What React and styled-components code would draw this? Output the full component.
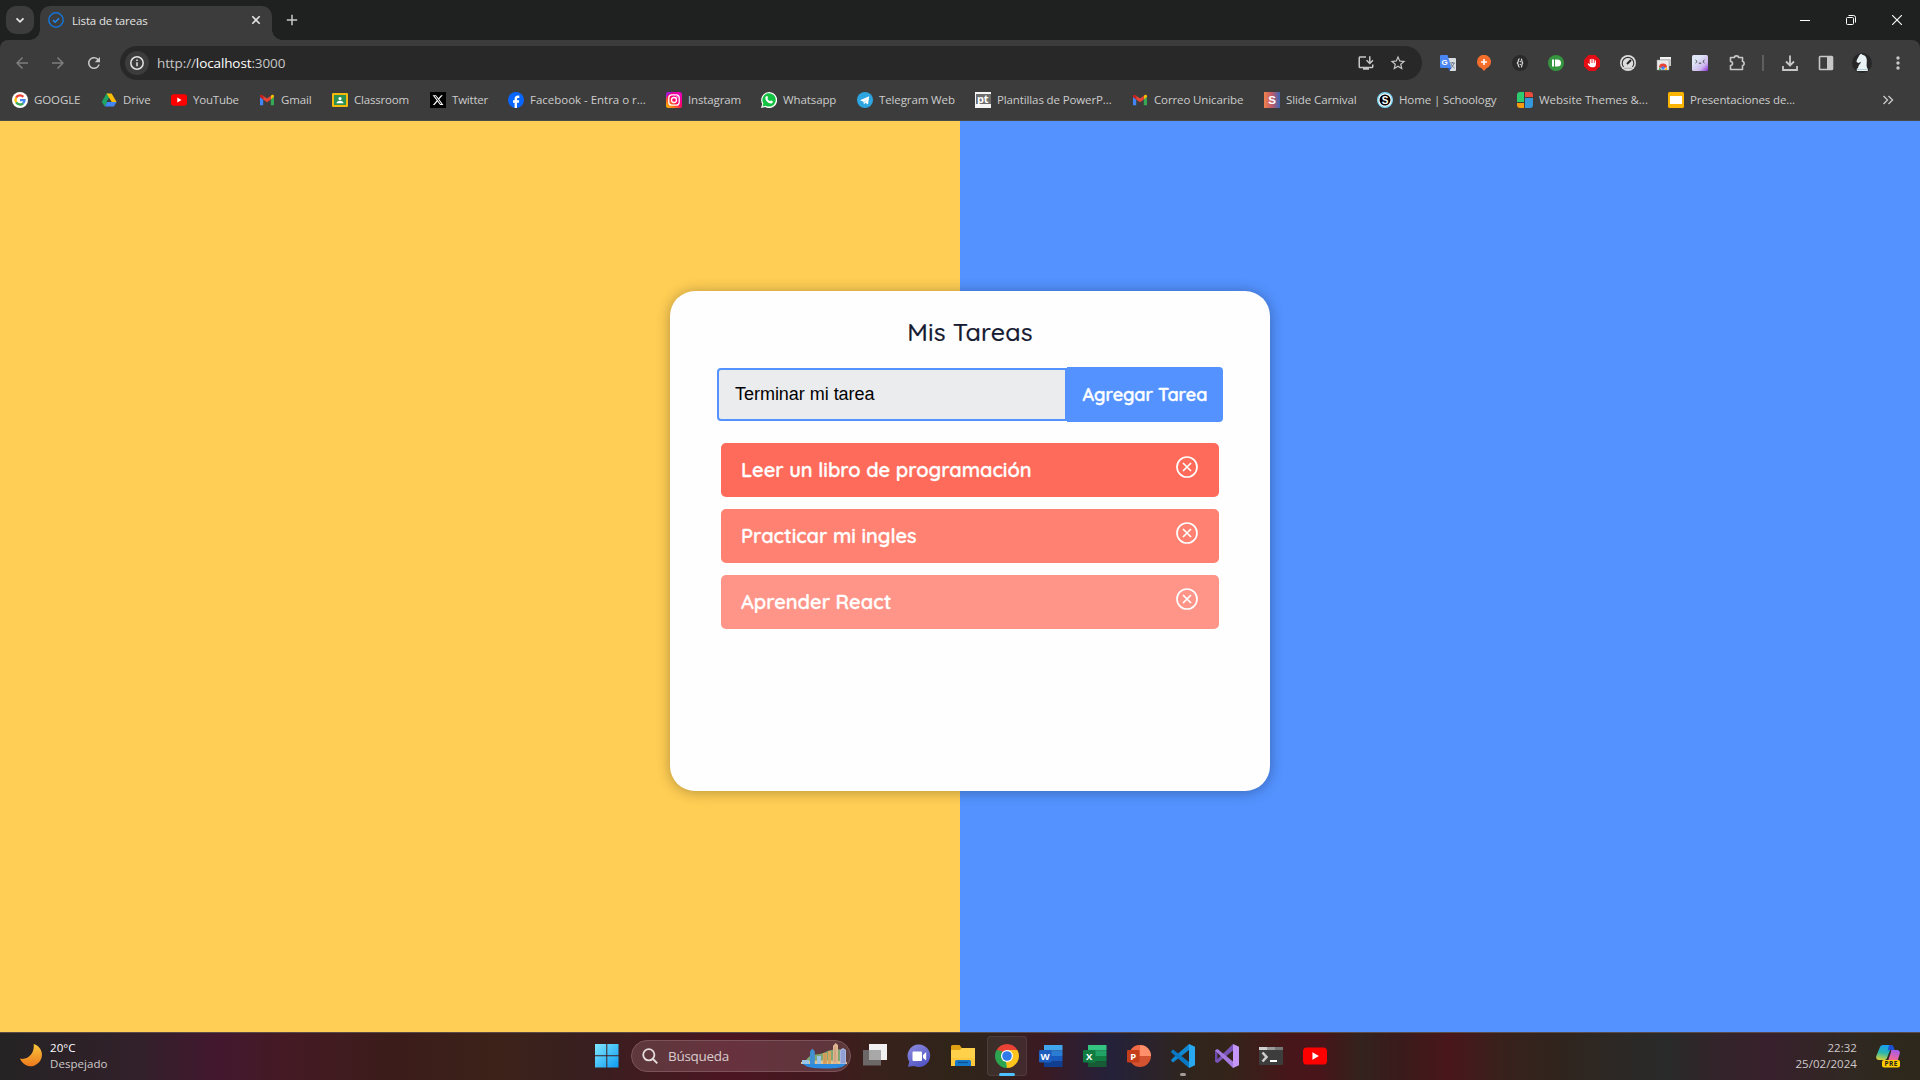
import React from "react";
import styled, { createGlobalStyle } from "styled-components";
import { MdArrowBack, MdArrowForward, MdRefresh, MdStarBorder, MdOutlineInstallDesktop, MdMoreVert } from "react-icons/md";
import { FaXTwitter, FaHand } from "react-icons/fa6";

const Global = createGlobalStyle`
  * { box-sizing: border-box; }
  body { margin: 0; overflow: hidden; background: #3c3c3c; }
  svg { display: block; flex: none; }
  button { border: 0; padding: 0; background: none; font: inherit; color: inherit; }
`;

const ui = `"Open Sans", "Noto Sans", sans-serif`;
const round = `Quicksand, Lato, "Open Sans", sans-serif`;

const Screen = styled.div`
  width: 1920px;
  height: 1080px;
  display: flex;
  flex-direction: column;
  font-family: ${ui};
`;

/* ---------- browser chrome ---------- */
const TabStrip = styled.div`
  height: 40px;
  display: flex;
  align-items: flex-end;
  background: #1f2120;
  color: #e3e3e3;
`;
const TabSearch = styled.button`
  width: 28px;
  height: 28px;
  margin: 0 6px 6px;
  display: grid;
  place-items: center;
  border-radius: 10px;
  background: #3c3c3c;
`;
const Tab = styled.div`
  position: relative;
  width: 232px;
  height: 34px;
  padding: 0 8px 6px 8px;
  display: flex;
  align-items: center;
  border-radius: 10px 10px 0 0;
  background: #3c3c3c;
  &::before,
  &::after {
    content: "";
    position: absolute;
    bottom: 0;
    width: 10px;
    height: 10px;
  }
  &::before {
    left: -10px;
    background: radial-gradient(circle at 0 0, transparent 9.5px, #3c3c3c 10px);
  }
  &::after {
    right: -10px;
    background: radial-gradient(circle at 100% 0, transparent 9.5px, #3c3c3c 10px);
  }
`;
const TabTitle = styled.span`
  flex: 1;
  margin-left: 8px;
  font-size: 11.5px;
  letter-spacing: -0.16px;
  white-space: nowrap;
`;
const NewTab = styled.button`
  width: 28px;
  height: 28px;
  margin: 0 0 6px 6px;
  display: grid;
  place-items: center;
`;
const WindowButtons = styled.div`
  height: 40px;
  margin-left: auto;
  display: flex;
`;
const WindowButton = styled.button`
  width: 46px;
  display: grid;
  place-items: center;
`;

const ToolbarBack = styled.div`
  background: #1f2120;
`;
const Toolbar = styled.div`
  height: 46px;
  padding: 0 4px 0 4px;
  display: flex;
  align-items: center;
  border-radius: 8px 8px 0 0;
  background: #3c3c3c;
  color: #c7c7c7;
`;
const NavButton = styled.button`
  width: 36px;
  height: 34px;
  display: grid;
  place-items: center;
  color: ${(p) => (p.$dim ? "#7d7d7d" : "#c7c7c7")};
`;
const AddressBar = styled.div`
  width: 1302px;
  height: 34px;
  margin-left: 8px;
  padding: 0 14px 0 5px;
  display: flex;
  align-items: center;
  border-radius: 17px;
  background: #282828;
`;
const SiteInfo = styled.span`
  width: 24px;
  height: 24px;
  display: grid;
  place-items: center;
  border-radius: 50%;
  background: #3c3c3c;
`;
const Url = styled.span`
  flex: 1;
  margin-left: 8px;
  font-size: 13.5px;
  letter-spacing: -0.11px;
  color: #c7c7c7;
  b {
    font-weight: 400;
    color: #fff;
  }
`;
const AddressAction = styled.button`
  width: 20px;
  margin-left: 12px;
  display: grid;
  place-items: center;
  color: #c7c7c7;
`;
const Extensions = styled.div`
  margin-left: 8px;
  display: flex;
  align-items: center;
`;
const Extension = styled.button`
  width: 36px;
  height: 34px;
  display: grid;
  place-items: center;
  color: #c7c7c7;
`;
const Divider = styled.span`
  width: 2px;
  height: 16px;
  margin: 0 8px;
  background: #5f5f5f;
`;

const BookmarksBar = styled.div`
  height: 35px;
  padding: 0 26px 7px 12px;
  display: flex;
  align-items: center;
  background: #3c3c3c;
  border-bottom: 1px solid #4a4a4a;
  color: #cccccc;
`;
const Bookmark = styled.a`
  width: ${(p) => p.$w}px;
  display: flex;
  flex: none;
  align-items: center;
  gap: 6px;
  font-size: 11.5px;
  letter-spacing: ${(p) => p.$ls ?? -0.12}px;
  white-space: nowrap;
`;
const More = styled.button`
  margin-left: auto;
`;

/* ---------- page ---------- */
const Page = styled.main`
  flex: 1;
  padding-left: 20px;
  display: flex;
  justify-content: center;
  align-items: flex-start;
  background: linear-gradient(90deg, #ffce54 50%, #5392ff 50%);
`;
const Card = styled.section`
  width: 600px;
  height: 500px;
  margin-top: 170px;
  padding: 21px 47px 0;
  display: flex;
  flex-direction: column;
  align-items: center;
  border-radius: 25px;
  background: #fefefe;
  box-shadow: 0 1px 14px rgba(0, 0, 0, 0.3);
`;
const Title = styled.h1`
  height: 40px;
  margin: 0;
  font: 500 25px/40px ${round};
  letter-spacing: 0.15px;
  color: #161a31;
  -webkit-text-stroke: 0.2px #161a31;
`;
const Form = styled.form`
  width: 506px;
  height: 55px;
  margin-top: 15px;
  display: flex;
  align-items: center;
`;
const Input = styled.input`
  width: 350px;
  height: 53px;
  padding: 0 16px;
  border: 2px solid #5392ff;
  border-radius: 4px 0 0 4px;
  outline: 0;
  background: #ebecee;
  color: #000;
  font: 18px "Liberation Sans", Arial, sans-serif;
  letter-spacing: -0.03px;
`;
const AddButton = styled.button`
  width: 156px;
  height: 55px;
  border-radius: 0 4px 4px 0;
  background: #5392ff;
  color: #fff;
  font: 600 18px ${round};
  -webkit-text-stroke: 0.4px #fff;
  white-space: nowrap;
`;
const List = styled.ul`
  width: 498px;
  margin: 21px 0 0;
  padding: 0;
  display: flex;
  flex-direction: column;
  gap: 12px;
  list-style: none;
`;
const Task = styled.li`
  height: 54px;
  padding: 0 21.500px 2px 20px;
  display: flex;
  align-items: center;
  justify-content: space-between;
  border-radius: 5px;
  background: ${(p) => p.$bg};
  color: #fff;
  font: 600 20px ${round};
  -webkit-text-stroke: 0.3px #fff;
`;
const Remove = styled.button`
  padding-bottom: 4px;
`;

/* ---------- taskbar ---------- */
const Taskbar = styled.footer`
  height: 48px;
  padding-bottom: 2px;
  display: flex;
  align-items: center;
  border-top: 1px solid #5a4a48;
  background: linear-gradient(
    90deg,
    #252324 0,
    #32202a 140px,
    #43182f 215px,
    #451a24 285px,
    #3b1c1a 400px,
    #3c2219 500px,
    #38201f 570px,
    #421a20 660px,
    #4b1521 730px,
    #42191f 820px,
    #3a211c 870px,
    #302419 950px,
    #30231d 990px,
    #3b1a22 1040px,
    #24213a 1110px,
    #30251d 1190px,
    #34241a 1230px,
    #47161a 1290px,
    #48151a 1320px,
    #33221d 1360px,
    #3a1b1b 1400px,
    #49161b 1450px,
    #39211c 1500px,
    #30251e 1560px,
    #292a2a 1665px,
    #33242a 1720px,
    #38202c 1770px,
    #302822 1850px,
    #2d281a 1920px
  );
  color: #fff;
`;
const Weather = styled.div`
  width: 585px;
  padding-left: 20px;
  display: flex;
  align-items: center;
  gap: 6px;
`;
const Lines = styled.div`
  font-size: 11.5px;
  line-height: 16px;
  letter-spacing: 0.05px;
  text-align: ${(p) => p.$align};
`;
const Muted = styled.div`
  color: #cfc9ca;
`;
const TaskButton = styled.button`
  position: relative;
  width: 44px;
  height: 46px;
  display: grid;
  place-items: center;
`;
const Apps = styled.div`
  margin-left: 2px;
  display: flex;
`;
const ActiveTile = styled.span`
  width: 40px;
  height: 40px;
  display: grid;
  place-items: center;
  border-radius: 4px;
  border: 1px solid rgba(255, 255, 255, 0.08);
  background: rgba(255, 255, 255, 0.06);
`;
const Indicator = styled.i`
  position: absolute;
  bottom: 3px;
  left: ${(p) => 22 - p.$w / 2}px;
  width: ${(p) => p.$w}px;
  height: 3px;
  border-radius: 2px;
  background: ${(p) => p.$c};
`;
const SearchBox = styled.div`
  width: 220px;
  height: 32px;
  margin-left: 2px;
  padding: 0 2px 0 10px;
  display: flex;
  align-items: center;
  border: 1px solid #7b5359;
  border-radius: 16px;
  background: rgba(255, 205, 215, 0.16);
  color: #d8cccd;
  font-size: 13.5px;
`;
const SearchText = styled.span`
  flex: 1;
  margin-left: 10px;
  letter-spacing: -0.3px;
`;
const Tray = styled.div`
  margin-left: auto;
  padding-right: 20px;
  display: flex;
  align-items: center;
  gap: 19px;
`;

/* ---------- drawings ---------- */
const Svg = ({ s = 16, v = 16, children }) => (
  <svg width={s} height={s} viewBox={`0 0 ${v} ${v}`} fill="none">
    {children}
  </svg>
);
const Google = () => (
  <Svg>
    <circle cx="8" cy="8" r="8" fill="#fff" />
    <g strokeWidth="2.3">
      <path d="M4.1 5.7A4.5 4.5 0 0 1 11.3 4.9" stroke="#ea4335" />
      <path d="M4.1 5.7A4.5 4.5 0 0 0 4.2 10.4" stroke="#fbbc05" />
      <path d="M4.2 10.4A4.5 4.5 0 0 0 11.1 11.3" stroke="#34a853" />
      <path d="M11.1 11.3A4.5 4.5 0 0 0 12.5 8.2H8" stroke="#4285f4" />
    </g>
  </Svg>
);
const Drive = () => (
  <Svg>
    <path d="M5.5 1.5h2.6l2 3.5-6.3 9.5L.8 10z" fill="#1fa463" />
    <path d="M5.6 1.5h5L15.6 10h-5z" fill="#fbbc04" />
    <path d="M3.8 14.6 6.4 10h9.2l-2.7 4.6z" fill="#4285f4" />
    <path d="m8 5.7 2.4 4.3H5.5z" fill="#3c3c3c" />
  </Svg>
);
const YouTube = ({ s = 16 }) => (
  <Svg s={s}>
    <rect x="0" y="2.3" width="16" height="11.4" rx="2.6" fill="#f00" />
    <path d="M6.3 5.5v5l4.3-2.5z" fill="#fff" />
  </Svg>
);
const Gmail = () => (
  <Svg>
    <path d="M1 13.3V5l3.2 2.4v5.9z" fill="#4285f4" />
    <path d="M11.8 13.3V7.4L15 5v8.3z" fill="#34a853" />
    <path d="M11.8 7.4V3.8l1-.8c1-.7 2.2 0 2.2 1.1V5z" fill="#fbbc04" />
    <path d="M4.2 7.4V3.8L8 6.6l3.8-2.8v3.6L8 10.3z" fill="#ea4335" />
    <path d="M1 5v-.9C1 3 2.2 2.3 3.2 3l1 .8v3.6z" fill="#c5221f" />
  </Svg>
);
const Classroom = () => (
  <Svg>
    <rect y="1" width="16" height="14" rx="1" fill="#f6b90c" />
    <rect x="2" y="3" width="12" height="10" fill="#2f9150" />
    <circle cx="8" cy="6.6" r="1.6" fill="#fff" />
    <path d="M4.5 11.3c0-3.4 7-3.4 7 0z" fill="#fff" />
  </Svg>
);
const Twitter = () => (
  <Svg>
    <rect width="16" height="16" fill="#000" />
    <FaXTwitter x="2" y="2" size={12} color="#fff" />
  </Svg>
);
const Facebook = () => (
  <Svg>
    <circle cx="8" cy="8" r="8" fill="#0866ff" />
    <path d="M6.6 16v-5.3H5V8.3h1.6V7.2c0-2.4 1.1-3.6 3.6-3.6.4 0 .9.1 1.1.1v2.2h-1c-1 0-1.3.4-1.3 1.3v1.1h2.2l-.4 2.4H9V16z" fill="#fff" />
  </Svg>
);
const Instagram = () => (
  <Svg>
    <defs>
      <linearGradient id="ig" x1="0" y1="1" x2=".8" y2="0">
        <stop offset="0" stopColor="#ffc800" />
        <stop offset=".3" stopColor="#ff6a1c" />
        <stop offset=".55" stopColor="#ff0069" />
        <stop offset="1" stopColor="#e800c0" />
      </linearGradient>
    </defs>
    <rect width="16" height="16" rx="2.5" fill="url(#ig)" />
    <path d="M0 7V2.5A2.5 2.5 0 0 1 2.5 0H9C4 .5 1 3 0 7z" fill="#8a20f0" opacity=".8" />
    <rect x="2.8" y="2.8" width="10.4" height="10.4" rx="3" stroke="#fff" strokeWidth="1.3" />
    <circle cx="8" cy="8" r="2.5" stroke="#fff" strokeWidth="1.3" />
    <circle cx="11" cy="5" r=".7" fill="#fff" />
  </Svg>
);
const Whatsapp = () => (
  <Svg>
    <path d="M0 16l1.2-4A8 8 0 1 1 4.2 15z" fill="#fff" />
    <path d="M1.6 14.4l.8-2.9A6.7 6.7 0 1 1 4.7 13.7z" fill="#13c143" />
    <path d="M5.3 4.2c.4-.4.9-.3 1.1.1l.6 1.3c.1.3-.6.9-.5 1.2.5 1 1.5 2 2.6 2.4.3.1.8-.9 1.2-.7l1.4.7c.5.3 0 1.6-.7 2-2.8 1.2-7-2.7-6.6-5.5 0-.6.5-1.2.9-1.5z" fill="#fff" />
  </Svg>
);
const Telegram = () => (
  <Svg>
    <circle cx="8" cy="8" r="8" fill="#2ca5e0" />
    <path d="M3 8.2 12.2 4.2 11 12.4 8.4 10.7 7 12.3 6.6 9.7z" fill="#fff" />
    <path d="M6.6 9.7 10.5 6.2 8.3 10.7 7 12.3z" fill="#d5ebf7" />
  </Svg>
);
const Plantillas = () => (
  <Svg>
    <rect width="16" height="16" fill="#f5f5f5" />
    <rect x="1" y="2" width="15" height="10" fill="#6d6d6d" />
    <text x="2" y="11" fontSize="11" fontWeight="700" fill="#fff" fontFamily="Open Sans, sans-serif">pt</text>
  </Svg>
);
const Slide = () => (
  <Svg>
    <defs>
      <linearGradient id="sl"><stop stopColor="#f0824c" /><stop offset=".5" stopColor="#c05a6a" /><stop offset="1" stopColor="#3d65b5" /></linearGradient>
    </defs>
    <rect width="16" height="16" fill="url(#sl)" />
    <text x="8" y="12.3" fontSize="11.5" fontWeight="700" fill="#fff" textAnchor="middle" fontFamily="Liberation Sans, sans-serif">S</text>
  </Svg>
);
const Schoology = () => (
  <Svg>
    <circle cx="8" cy="8" r="7.3" fill="#fff" stroke="#7fd4f5" strokeWidth="1.4" />
    <circle cx="8" cy="8" r="5.5" fill="#000" />
    <text x="8" y="11.6" fontSize="10" fontWeight="700" fill="#fff" textAnchor="middle" fontFamily="Liberation Sans, sans-serif">S</text>
  </Svg>
);
const Themes = () => (
  <Svg>
    <path d="M0 10V3a3 3 0 0 1 3-3h4v10z" fill="#2ecc71" />
    <path d="M8 5V0h5a3 3 0 0 1 3 3v2z" fill="#e74c3c" />
    <path d="M8 6h8v7a3 3 0 0 1-3 3H8z" fill="#3498db" />
    <path d="M0 11h7v5H3a3 3 0 0 1-3-3z" fill="#f39c12" />
  </Svg>
);
const Slides = () => (
  <Svg>
    <rect width="16" height="16" rx="1.5" fill="#f9b404" />
    <rect x="2" y="4" width="12" height="8" fill="#fff" />
  </Svg>
);

const Translate = () => (
  <Svg>
    <path d="M6 3h9a1 1 0 0 1 1 1v11a1 1 0 0 1-1 1h-5z" fill="#d9dee3" />
    <path d="M10 8h5M12.5 7v1M14 8c-.5 2.500-2 4-3.500 5M11 9c.5 1.500 2 3 3.500 4" stroke="#6b7c88" strokeWidth="1" />
    <path d="M1 0h6.500l4 13H1a1 1 0 0 1-1-1V1a1 1 0 0 1 1-1z" fill="#4b87f3" />
    <path d="M8 13h3.500L9 16z" fill="#2a56c6" />
    <text x="1.5" y="9.5" fontSize="8" fontWeight="700" fill="#fff" fontFamily="Liberation Sans, sans-serif">G</text>
  </Svg>
);
const Pin = () => (
  <Svg>
    <path d="M8 16 5.500 13.300A7 7 0 0 1 1 7a7 7 0 1 1 9.500 6.300z" fill="#f36d2b" />
    <path d="M8 4v6M5 7h6" stroke="#fff" strokeWidth="1.6" />
  </Svg>
);
const Braces = () => (
  <Svg>
    <circle cx="8" cy="8" r="8" fill="#2a2a2a" />
    <path d="M7.6 3.800C5.800 3.800 6.800 7 5.400 8c1.400 1 .4 4.200 2.200 4.200M9 3.800c1.500.2.400 3.200 1.600 4.200-1.200 1-.1 4-1.600 4.200" stroke="#e2e2e2" strokeWidth="1.2" />
    <circle cx="8.3" cy="6.5" r=".7" fill="#e2e2e2" />
    <circle cx="8.3" cy="9.5" r=".7" fill="#e2e2e2" />
  </Svg>
);
const Pushbullet = () => (
  <Svg>
    <circle cx="8" cy="8" r="8" fill="#35953f" />
    <path d="M4 4.500h2v7H4zM7 4.500h2.500a3.500 3.500 0 0 1 0 7H7z" fill="#fff" />
  </Svg>
);
const AdBlock = () => (
  <Svg>
    <path d="M4.700 0h6.600L16 4.700v6.600L11.300 16H4.700L0 11.300V4.700z" fill="#e40d13" />
    <FaHand x="3.5" y="3.5" size={9} color="#fff" />
  </Svg>
);
const Gauge = () => (
  <Svg>
    <circle cx="8" cy="8" r="8" fill="#ddd" />
    <path d="M3.600 12A5.800 5.800 0 1 1 12.400 12" stroke="#333" strokeWidth="1.1" />
    <path d="m7 9 4-4" stroke="#222" strokeWidth="1.9" />
    <path d="M4 13.300h8" stroke="#aaa" />
  </Svg>
);
const Stack = () => (
  <Svg>
    <path d="M4 2h11v9H4z" fill="#c9c9c9" />
    <path d="M4 2h11v2H4z" fill="#f3f3f3" />
    <path d="M1 5h12v10H1z" fill="#e9e9e9" stroke="#999" strokeWidth=".5" />
    <path d="M3 12.500a4 4 0 0 1 8 0l-4 .5z" fill="#ea4335" />
    <path d="M3 12 5.500 15H3.200z" fill="#34a853" />
    <path d="M11 12a4 4 0 0 1-.2 3H8.500z" fill="#fbbc05" />
    <circle cx="7" cy="13" r="1.8" fill="#4285f4" />
  </Svg>
);
const Face = () => (
  <Svg>
    <defs>
      <linearGradient id="fc" x1="0" y1="0" x2="1" y2="1"><stop offset=".3" stopColor="#dfe6f6" /><stop offset=".7" stopColor="#cdb9ee" /><stop offset="1" stopColor="#8a2bd6" /></linearGradient>
    </defs>
    <rect width="16" height="16" rx="1.5" fill="url(#fc)" />
    <path d="m3.500 5 1.600 1.500L3.500 8M12.500 5l-1.600 1.500L12.500 8M6.800 8.200h2.400" stroke="#333" strokeWidth=".9" />
  </Svg>
);
const Puzzle = () => (
  <Svg s={18} v={18}>
    <path d="M3.500 3.500h4a2 1.600 0 0 1 4 0h4v4a1.600 2 0 0 1 0 4v4h-12v-4a2 2 0 0 0 0-4z" stroke="#c7c7c7" strokeWidth="1.6" strokeLinejoin="round" />
  </Svg>
);
const Knight = () => (
  <Svg s={20} v={20}>
    <circle cx="10" cy="10" r="10" fill="#272727" />
    <path d="M7.500 2 9 .8l1.500 1c3 .6 4.500 3 4.300 6 0 3-.5 4.500.2 7l.8 1.200v2H4.800v-2L6 14.800c.3-2.500 2.500-4 3-6L6.500 10 4.500 9l.3-2z" fill="#e9f3f6" />
    <path d="M5 16.500h10.500" stroke="#9fc0cc" strokeWidth=".7" />
  </Svg>
);

const Windows = () => (
  <Svg s={24} v={24}>
    <defs>
      <linearGradient id="wn" x1="0" y1="0" x2="1" y2="1"><stop stopColor="#7fe7fd" /><stop offset="1" stopColor="#0d9bf5" /></linearGradient>
    </defs>
    <path d="M0 0h11.300v11.300H0zM12.300 0h11.200v11.300H12.300zM0 12.300h11.300v11.200H0zM12.300 12.300h11.200v11.200H12.300z" fill="url(#wn)" />
  </Svg>
);
const City = () => (
  <svg width="48" height="26" viewBox="0 0 48 26">
    <path d="M5 20c3-9 9-8 15-9S33 3 45 8v14H5z" fill="#7fa774" />
    <path d="M1 19c10-2 36-2 46 0v2H1z" fill="#e3c48e" />
    <path d="M3 21h43c-3 4-10 4.500-20 4.500S7 25 3 21z" fill="#2b8be0" />
    <path d="M10 8.500l2.500-3 2.300 3V21H10z" fill="#3f8fd2" />
    <path d="M2 17h7v4H2zM17 13h4v8h-4z" fill="#9cc4e6" />
    <path d="M23 10h4v11h-4zM28 8h3v13h-3z" fill="#d7a45f" />
    <path d="M33 3l2.500-3L38 2v19h-5z" fill="#dfb491" />
    <path d="M40 7l3-2 3 2v14h-6z" fill="#a7b5e0" />
    <path d="M42 7v13M44 7v13" stroke="#6979b8" strokeWidth=".7" />
    <path d="M35 4v15M25 11v9" stroke="#b98662" strokeWidth=".7" />
  </svg>
);
const TaskView = () => (
  <Svg s={24} v={24}>
    <path d="M6 0h18v16H6z" fill="#f0f0f0" />
    <path d="M0 6h18v15.500H0z" fill="#6c6867" />
    <path d="M6 6h12v10H6z" fill="#a8a8a8" />
  </Svg>
);
const Chat = () => (
  <Svg s={24} v={24}>
    <defs>
      <linearGradient id="ch" x1="0" y1="0" x2=".6" y2="1"><stop stopColor="#8f8de0" /><stop offset="1" stopColor="#5356c4" /></linearGradient>
    </defs>
    <path d="M12 .5a11.300 11.300 0 1 1-5 21.500l-6 .8 1.300-5A11.300 11.300 0 0 1 12 .5z" fill="url(#ch)" />
    <rect x="5.5" y="7.5" width="9.5" height="9.5" rx="1" fill="#fff" />
    <path d="M16 11l3.200-3v8.500L16 13.700z" fill="#fff" />
  </Svg>
);
const Explorer = () => (
  <Svg s={24} v={24}>
    <path d="M0 2.500A1.500 1.500 0 0 1 1.500 1h7l2 2.500V9H0z" fill="#e0a013" />
    <path d="M0 6h9l1.500-2H24v18H0z" fill="#ffd04a" />
    <path d="M0 14h24v8H0z" fill="#fbc02d" opacity=".5" />
    <path d="M4 22v-4.500A1.500 1.500 0 0 1 5.500 16h13a1.500 1.500 0 0 1 1.500 1.500V22z" fill="#1578c8" />
    <path d="M7 18.500h10" stroke="#0c4f92" strokeWidth="1.2" />
  </Svg>
);
const Chrome = () => (
  <Svg s={24} v={24}>
    <path d="M12 12 1.610 6A12 12 0 0 1 22.390 6z" fill="#ea4335" />
    <path d="M12 12V24A12 12 0 0 1 1.610 6z" fill="#2da44f" />
    <path d="M12 12 22.390 6A12 12 0 0 1 12 24z" fill="#fcc41c" />
    <path d="M12 6h10.390L17 12z" fill="#fcc41c" />
    <path d="M6.800 15 1.610 6l5 1 2 5z" fill="#2da44f" />
    <path d="M17.200 15 12 24l-1-6z" fill="#fcc41c" />
    <circle cx="12" cy="12" r="6" fill="#fff" />
    <circle cx="12" cy="12" r="4.8" fill="#3079ea" />
  </Svg>
);
const Office = ({ letter, bands, badge }) => (
  <Svg s={24} v={24}>
    {bands.map((fill, i) => (
      <rect key={fill} x="5" y={1 + i * 5.5} width="18.5" height="5.5" fill={fill} />
    ))}
    <rect x="0" y="6" width="12.5" height="12.5" rx="1.2" fill={badge} />
    <text x="6.2" y="15.800" fontSize="9.5" fontWeight="700" fill="#fff" textAnchor="middle" fontFamily="Open Sans, sans-serif">{letter}</text>
  </Svg>
);
const PowerPoint = () => (
  <Svg s={24} v={24}>
    <circle cx="13" cy="12" r="11" fill="#d35230" />
    <path d="M13 1a11 11 0 0 1 11 11H13z" fill="#ff8f6b" />
    <path d="M13 1a11 11 0 0 0-11 11h11z" fill="#ed6c47" />
    <rect x="0" y="6" width="12.5" height="12.5" rx="1.2" fill="#c43e1c" />
    <text x="6.2" y="15.800" fontSize="9.5" fontWeight="700" fill="#fff" textAnchor="middle" fontFamily="Open Sans, sans-serif">P</text>
  </Svg>
);
const VsCode = () => (
  <Svg s={24} v={24}>
    <path d="M18 6 2 18.500.3 17V15.500L18 0z" fill="#1189d2" />
    <path d="M18 18 2 5.500.3 7v1.500L18 24z" fill="#0a78c2" />
    <path d="M18 0l6 2.800v18.400L18 24z" fill="#2aa9f3" />
  </Svg>
);
const VisualStudio = () => (
  <Svg s={24} v={24}>
    <path d="M0 6.500 2.500 5v14L0 17.500z" fill="#6a4bab" />
    <path d="M18 0v6.500L2.500 19 0 17.500z" fill="#7a55b8" />
    <path d="M2.500 5 18 17.500V24L0 6.500z" fill="#a57be0" />
    <path d="M18 0l6 2.800v18.400L18 24z" fill="#c596f5" />
  </Svg>
);
const Terminal = () => (
  <Svg s={24} v={24}>
    <rect y="3" width="24" height="18" rx="1" fill="#3d3d3d" />
    <path d="M0 3h8v3H0z" fill="#d0d0d0" />
    <path d="M8 3h8v3H8z" fill="#9a9a9a" />
    <path d="M16 3h8v3h-8z" fill="#777" />
    <path d="m3.500 8.500 4 4.500-4 4.500" stroke="#ccc" strokeWidth="2.6" />
    <path d="M11 17h7" stroke="#fff" strokeWidth="2" />
  </Svg>
);
const Moon = () => (
  <svg width="24" height="24" viewBox="0 0 24 24">
    <defs>
      <linearGradient id="mo" x1="0" y1="0" x2="0" y2="1"><stop stopColor="#f8c63d" /><stop offset="1" stopColor="#ee7a1c" /></linearGradient>
    </defs>
    <path d="M14.500 0A12 12 0 1 1 0 15.500C8 17.500 16 10 14.500 0z" fill="url(#mo)" transform="scale(.94)" />
  </svg>
);
const Copilot = () => (
  <svg width="24" height="24" viewBox="0 0 24 24">
    <defs>
      <linearGradient id="c1" x1=".5" y1="0" x2=".3" y2="1"><stop stopColor="#1a9ff0" /><stop offset=".5" stopColor="#27b6b0" /><stop offset="1" stopColor="#d6d23a" /></linearGradient>
      <linearGradient id="c2" x1=".7" y1="0" x2=".4" y2="1"><stop stopColor="#a05cf0" /><stop offset="1" stopColor="#ff6a88" /></linearGradient>
    </defs>
    <path d="M7 1h9l-5 13c-.6 1.500-1.500 2-3 2H3c-2.500 0-3.500-2-2.500-4.500L4 3c.5-1.300 1.500-2 3-2z" fill="url(#c1)" />
    <path d="M13 1h2c2 0 2.500 1 3 3l.7 2H14c-1.500 0-2 .5-2.500 2z" fill="#1d4fd0" />
    <path d="M15.500 6H21c2.500 0 3.500 2 2.500 4.500L21.500 17H12l3-9c.1-1 .2-2 .5-2z" fill="url(#c2)" />
    <rect x="6" y="16" width="18" height="7.500" rx="2" fill="#fc0" />
    <text x="15" y="22" fontSize="6.5" fontWeight="700" fill="#222" textAnchor="middle" textLength="13" fontFamily="Open Sans, sans-serif">PRE</text>
  </svg>
);

const bookmarks = [
  ["GOOGLE", Google, 89, -0.1],
  ["Drive", Drive, 70],
  ["YouTube", YouTube, 88, -0.2],
  ["Gmail", Gmail, 73],
  ["Classroom", Classroom, 98, -0.2],
  ["Twitter", Twitter, 78, -0.2],
  ["Facebook - Entra o r...", Facebook, 158, -0.02],
  ["Instagram", Instagram, 95, -0.14],
  ["Whatsapp", Whatsapp, 96, -0.1],
  ["Telegram Web", Telegram, 118],
  ["Plantillas de PowerP...", Plantillas, 157],
  ["Correo Unicaribe", Gmail, 132],
  ["Slide Carnival", Slide, 113, -0.1],
  ["Home | Schoology", Schoology, 140],
  ["Website Themes &...", Themes, 151, 0],
  ["Presentaciones de...", Slides, 140],
];
const extensions = [Translate, Pin, Braces, Pushbullet, AdBlock, Gauge, Stack, Face, Puzzle];
const tasks = [
  ["Leer un libro de programación", "#ff6b5a"],
  ["Practicar mi ingles", "#ff8172"],
  ["Aprender React", "#ff9588"],
];

export default function App() {
  return (
    <Screen>
      <Global />
      <TabStrip>
        <TabSearch>
          <Svg s={12} v={12}><path d="m2.500 4.300 3.500 3.500 3.500-3.500" stroke="#e3e3e3" strokeWidth="1.8" /></Svg>
        </TabSearch>
        <Tab>
          <Svg>
            <circle cx="8" cy="8" r="7.2" stroke="#1673d1" strokeWidth="1.5" />
            <path d="m5 8.200 2.200 2L11 6.300" stroke="#1e86f0" strokeWidth="1.6" />
          </Svg>
          <TabTitle>Lista de tareas</TabTitle>
          <Svg><path d="m4.300 4.300 7.400 7.400m0-7.400-7.400 7.400" stroke="#e3e3e3" strokeWidth="1.6" /></Svg>
        </Tab>
        <NewTab>
          <Svg s={12} v={12}><path d="M6 .8v10.400M.8 6h10.400" stroke="#c7c7c7" strokeWidth="1.5" /></Svg>
        </NewTab>
        <WindowButtons>
          <WindowButton><Svg s={10} v={10}><path d="M0 5.500h10" stroke="#fff" /></Svg></WindowButton>
          <WindowButton>
            <Svg s={10} v={10}>
              <rect x=".5" y="2.5" width="7" height="7" rx="1" stroke="#fff" />
              <path d="M2.500.5h5a2 2 0 0 1 2 2v5" stroke="#fff" />
            </Svg>
          </WindowButton>
          <WindowButton><Svg s={10} v={10}><path d="m0 0 10 10M10 0 0 10" stroke="#fff" strokeWidth="1.1" /></Svg></WindowButton>
        </WindowButtons>
      </TabStrip>
      <ToolbarBack>
        <Toolbar>
          <NavButton $dim><MdArrowBack size={18} /></NavButton>
          <NavButton $dim><MdArrowForward size={18} /></NavButton>
          <NavButton><MdRefresh size={18} /></NavButton>
          <AddressBar>
            <SiteInfo>
              <Svg>
                <circle cx="8" cy="8" r="6.2" stroke="#e3e3e3" strokeWidth="1.5" />
                <path d="M8 7.200v4M8 4.600v1.500" stroke="#e3e3e3" strokeWidth="1.5" />
              </Svg>
            </SiteInfo>
            <Url>http://<b>localhost</b>:3000</Url>
            <AddressAction><MdOutlineInstallDesktop size={18} /></AddressAction>
            <AddressAction><MdStarBorder size={18} /></AddressAction>
          </AddressBar>
          <Extensions>
            {extensions.map((Icon, i) => (
              <Extension key={i}><Icon /></Extension>
            ))}
            <Divider />
            <Extension>
              <Svg><path d="M8 .5v10M4 6.500l4 4 4-4M1 11v4h14v-4" stroke="#c7c7c7" strokeWidth="1.8" /></Svg>
            </Extension>
            <Extension>
              <Svg><rect x="1.5" y="1.5" width="13" height="13" rx=".8" stroke="#c7c7c7" strokeWidth="1.6" /><path d="M9 1.500h5.500v13H9z" fill="#c7c7c7" /></Svg>
            </Extension>
            <Extension><Knight /></Extension>
            <Extension><MdMoreVert size={20} /></Extension>
          </Extensions>
        </Toolbar>
      </ToolbarBack>
      <BookmarksBar>
        {bookmarks.map(([name, Icon, w, ls]) => (
          <Bookmark key={name} $w={w} $ls={ls}><Icon />{name}</Bookmark>
        ))}
        <More>
          <Svg s={12} v={12}><path d="m1.500 2 4 4-4 4M6.500 2l4 4-4 4" stroke="#c7c7c7" strokeWidth="1.4" /></Svg>
        </More>
      </BookmarksBar>

      <Page>
        <Card>
          <Title>Mis Tareas</Title>
          <Form onSubmit={(e) => e.preventDefault()}>
            <Input defaultValue="Terminar mi tarea" />
            <AddButton>Agregar Tarea</AddButton>
          </Form>
          <List>
            {tasks.map(([name, bg]) => (
              <Task key={name} $bg={bg}>
                {name}
                <Remove>
                  <Svg s={22} v={22}>
                    <circle cx="11" cy="11" r="10" stroke="#fff" strokeWidth="1.7" />
                    <path d="m7 7 8 8m0-8-8 8" stroke="#fff" strokeWidth="1.7" />
                  </Svg>
                </Remove>
              </Task>
            ))}
          </List>
        </Card>
      </Page>

      <Taskbar>
        <Weather>
          <Moon />
          <Lines $align="left">20°C<Muted>Despejado</Muted></Lines>
        </Weather>
        <TaskButton><Windows /></TaskButton>
        <SearchBox>
          <Svg><circle cx="6.8" cy="6.8" r="5.6" stroke="#e6dcdd" strokeWidth="1.8" /><path d="m11 11 4.300 4.300" stroke="#e6dcdd" strokeWidth="1.9" /></Svg>
          <SearchText>Búsqueda</SearchText>
          <City />
        </SearchBox>
        <Apps>
          <TaskButton><TaskView /></TaskButton>
          <TaskButton><Chat /></TaskButton>
          <TaskButton><Explorer /></TaskButton>
          <TaskButton><ActiveTile><Chrome /></ActiveTile><Indicator $w={16} $c="#4cc2ff" /></TaskButton>
          <TaskButton><Office letter="W" bands={["#41a5ee", "#2b7cd3", "#185abd", "#103f91"]} badge="#1d5dbe" /></TaskButton>
          <TaskButton><Office letter="X" bands={["#33c481", "#21a366", "#107c41", "#185c37"]} badge="#107c41" /></TaskButton>
          <TaskButton><PowerPoint /></TaskButton>
          <TaskButton><VsCode /><Indicator $w={6} $c="#a39c98" /></TaskButton>
          <TaskButton><VisualStudio /></TaskButton>
          <TaskButton><Terminal /></TaskButton>
          <TaskButton><YouTube s={24} /></TaskButton>
        </Apps>
        <Tray>
          <Lines $align="right"><Muted>22:32</Muted><Muted>25/02/2024</Muted></Lines>
          <Copilot />
        </Tray>
      </Taskbar>
    </Screen>
  );
}
